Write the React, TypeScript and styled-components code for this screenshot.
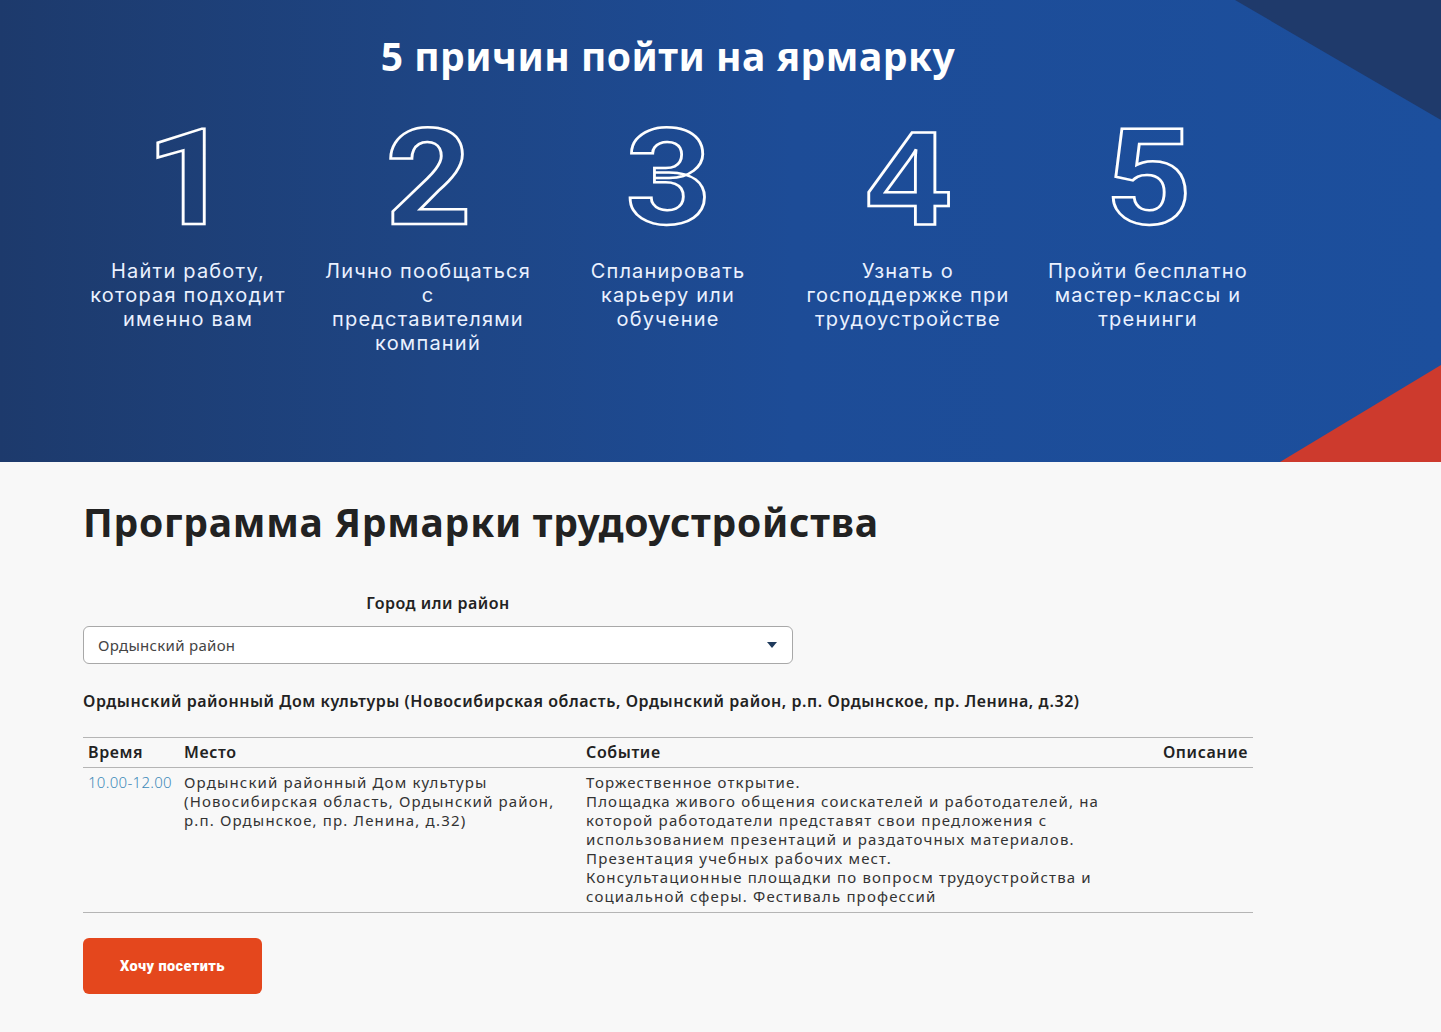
import React from "react";
import styled, { createGlobalStyle } from "styled-components";

const Global = createGlobalStyle`
  html, body { margin: 0; padding: 0; }
  body {
    background: #f8f8f8;
    font-family: "Noto Sans", "Open Sans", Arial, sans-serif;
    color: #222;
  }
`;

const Hero = styled.section`
  position: relative;
  height: 462px;
  overflow: hidden;
  background: linear-gradient(90deg, #1d3a6c 0%, #1e4584 30%, #1d4c97 55%, #1c4f9d 100%);
`;

const Shapes = styled.svg`
  position: absolute;
  inset: 0;
  width: 100%;
  height: 100%;
  pointer-events: none;
`;

const Container = styled.div`
  position: relative;
  width: 1200px;
  margin-left: 68px;
  box-sizing: border-box;
`;

const HeroInner = styled(Container)`
  padding-top: 31px;
  display: flex;
  flex-direction: column;
  align-items: center;
`;

const HeroTitle = styled.h2`
  margin: 0;
  font-size: 39px;
  line-height: 50px;
  font-weight: 700;
  color: #fff;
  letter-spacing: 0.5px;
`;

const Reasons = styled.div`
  display: grid;
  grid-template-columns: repeat(5, 240px);
  margin-top: 20px;
`;

const Reason = styled.div`
  display: flex;
  flex-direction: column;
  align-items: center;
  padding: 0 12px;
  text-align: center;
`;

const Digit = styled.div<{ $alt?: boolean }>`
  font-family: ${(p) =>
    p.$alt ? `"Liberation Sans", Arial, sans-serif` : `"Roboto", "Liberation Sans", Arial, sans-serif`};
  font-size: ${(p) => (p.$alt ? "133px" : "134px")};
  line-height: 150px;
  height: 150px;
  margin-top: 3px;
  margin-bottom: -3px;
  font-weight: 700;
  color: transparent;
  -webkit-text-stroke: 2.5px #ffffff;
  transform: scaleX(1.12);
`;

const ReasonText = styled.p`
  margin: 8px 0 0;
  font-family: "Inter", "Noto Sans", Arial, sans-serif;
  font-size: 20px;
  line-height: 24px;
  font-weight: 400;
  color: #eaf1ff;
  letter-spacing: 1.2px;
`;

const Line = styled.span`
  display: block;
  white-space: nowrap;
`;

const Main = styled(Container)`
  padding: 36px 15px 38px;
`;

const Heading = styled.h1`
  margin: 0;
  font-size: 39px;
  line-height: 48px;
  font-weight: 700;
  color: #222;
  letter-spacing: 0.75px;
`;

const Field = styled.div`
  width: 710px;
  margin-top: 47px;
  display: flex;
  flex-direction: column;
`;

const Label = styled.label`
  align-self: center;
  font-size: 16px;
  line-height: 20px;
  font-weight: 600;
  color: #222;
  letter-spacing: 0.5px;
`;

const Select = styled.div`
  margin-top: 13px;
  height: 38px;
  box-sizing: border-box;
  border: 1px solid #a8a8a8;
  border-radius: 6px;
  background: #fff;
  display: flex;
  align-items: center;
  justify-content: space-between;
  padding: 0 15px 0 14px;
  font-size: 15px;
  letter-spacing: 0.3px;
  color: #444;
`;

const Caret = styled.span`
  width: 0;
  height: 0;
  border-left: 5px solid transparent;
  border-right: 5px solid transparent;
  border-top: 6px solid #1f3b5c;
`;

const Address = styled.p`
  margin: 26px 0 0;
  font-size: 16px;
  line-height: 22px;
  font-weight: 600;
  color: #222;
  letter-spacing: 0.55px;
`;

const Table = styled.table`
  margin-top: 25px;
  width: 1170px;
  border-collapse: collapse;
  table-layout: fixed;
`;

const Th = styled.th<{ $right?: boolean }>`
  text-align: ${(p) => (p.$right ? "right" : "left")};
  font-size: 16px;
  font-weight: 600;
  color: #222;
  padding: 4px 5px 4px;
  line-height: 21px;
  letter-spacing: 0.6px;
  border-top: 1px solid #b5b5b5;
  border-bottom: 1px solid #b5b5b5;
`;

const Td = styled.td<{ $time?: boolean }>`
  vertical-align: top;
  font-size: 15px;
  letter-spacing: ${(p) => (p.$time ? "0.3px" : "1.15px")};
  line-height: 19px;
  font-weight: ${(p) => (p.$time ? 300 : 400)};
  color: ${(p) => (p.$time ? "#3d8ab8" : "#333")};
  padding: 5px 5px 6px;
  border-bottom: 1px solid #b5b5b5;
`;

const Button = styled.button`
  margin-top: 25px;
  width: 179px;
  height: 56px;
  border: none;
  border-radius: 6px;
  background: #e4471d;
  color: #fff;
  font-family: "Roboto", "Liberation Sans", Arial, sans-serif;
  font-weight: 900;
  font-size: 14.5px;
  letter-spacing: 0.4px;
  cursor: pointer;
`;

const reasons = [
  { n: "1", t: ["Найти работу,", "которая подходит", "именно вам"] },
  { n: "2", t: ["Лично пообщаться", "с", "представителями", "компаний"] },
  { n: "3", t: ["Спланировать", "карьеру или", "обучение"] },
  { n: "4", t: ["Узнать о", "господдержке при", "трудоустройстве"] },
  { n: "5", t: ["Пройти бесплатно", "мастер-классы и", "тренинги"] },
];

const eventLines = [
  "Торжественное открытие.",
  "Площадка живого общения соискателей и работодателей, на которой работодатели представят свои предложения с использованием презентаций и раздаточных материалов.",
  "Презентация учебных рабочих мест.",
  "Консультационные площадки по вопросм трудоустройства и социальной сферы. Фестиваль профессий",
];

export default function App() {
  return (
    <>
      <Global />
      <Hero>
        <Shapes viewBox="0 0 1441 462" preserveAspectRatio="none">
          <polygon points="1235,0 1441,0 1441,120" fill="#1f3a6b" />
          <polygon points="1280,462 1441,462 1441,365" fill="#cd3a2d" />
        </Shapes>
        <HeroInner>
          <HeroTitle>5 причин пойти на ярмарку</HeroTitle>
          <Reasons>
            {reasons.map((r) => (
              <Reason key={r.n}>
                <Digit $alt={r.n === "4"}>{r.n}</Digit>
                <ReasonText>
                  {r.t.map((l, i) => (
                    <Line key={i}>{l}</Line>
                  ))}
                </ReasonText>
              </Reason>
            ))}
          </Reasons>
        </HeroInner>
      </Hero>
      <Main>
        <Heading>Программа Ярмарки трудоустройства</Heading>
        <Field>
          <Label>Город или район</Label>
          <Select>
            <span>Ордынский район</span>
            <Caret />
          </Select>
        </Field>
        <Address>
          Ордынский районный Дом культуры (Новосибирская область, Ордынский район, р.п. Ордынское, пр. Ленина, д.32)
        </Address>
        <Table>
          <colgroup>
            <col style={{ width: 96 }} />
            <col style={{ width: 402 }} />
            <col style={{ width: 530 }} />
            <col style={{ width: 142 }} />
          </colgroup>
          <thead>
            <tr>
              <Th>Время</Th>
              <Th>Место</Th>
              <Th>Событие</Th>
              <Th $right>Описание</Th>
            </tr>
          </thead>
          <tbody>
            <tr>
              <Td $time>10.00-12.00</Td>
              <Td>
                Ордынский районный Дом культуры (Новосибирская область, Ордынский район, р.п. Ордынское, пр. Ленина, д.32)
              </Td>
              <Td>
                {eventLines.map((l, i) => (
                  <div key={i}>{l}</div>
                ))}
              </Td>
              <Td></Td>
            </tr>
          </tbody>
        </Table>
        <Button>Хочу посетить</Button>
      </Main>
    </>
  );
}
